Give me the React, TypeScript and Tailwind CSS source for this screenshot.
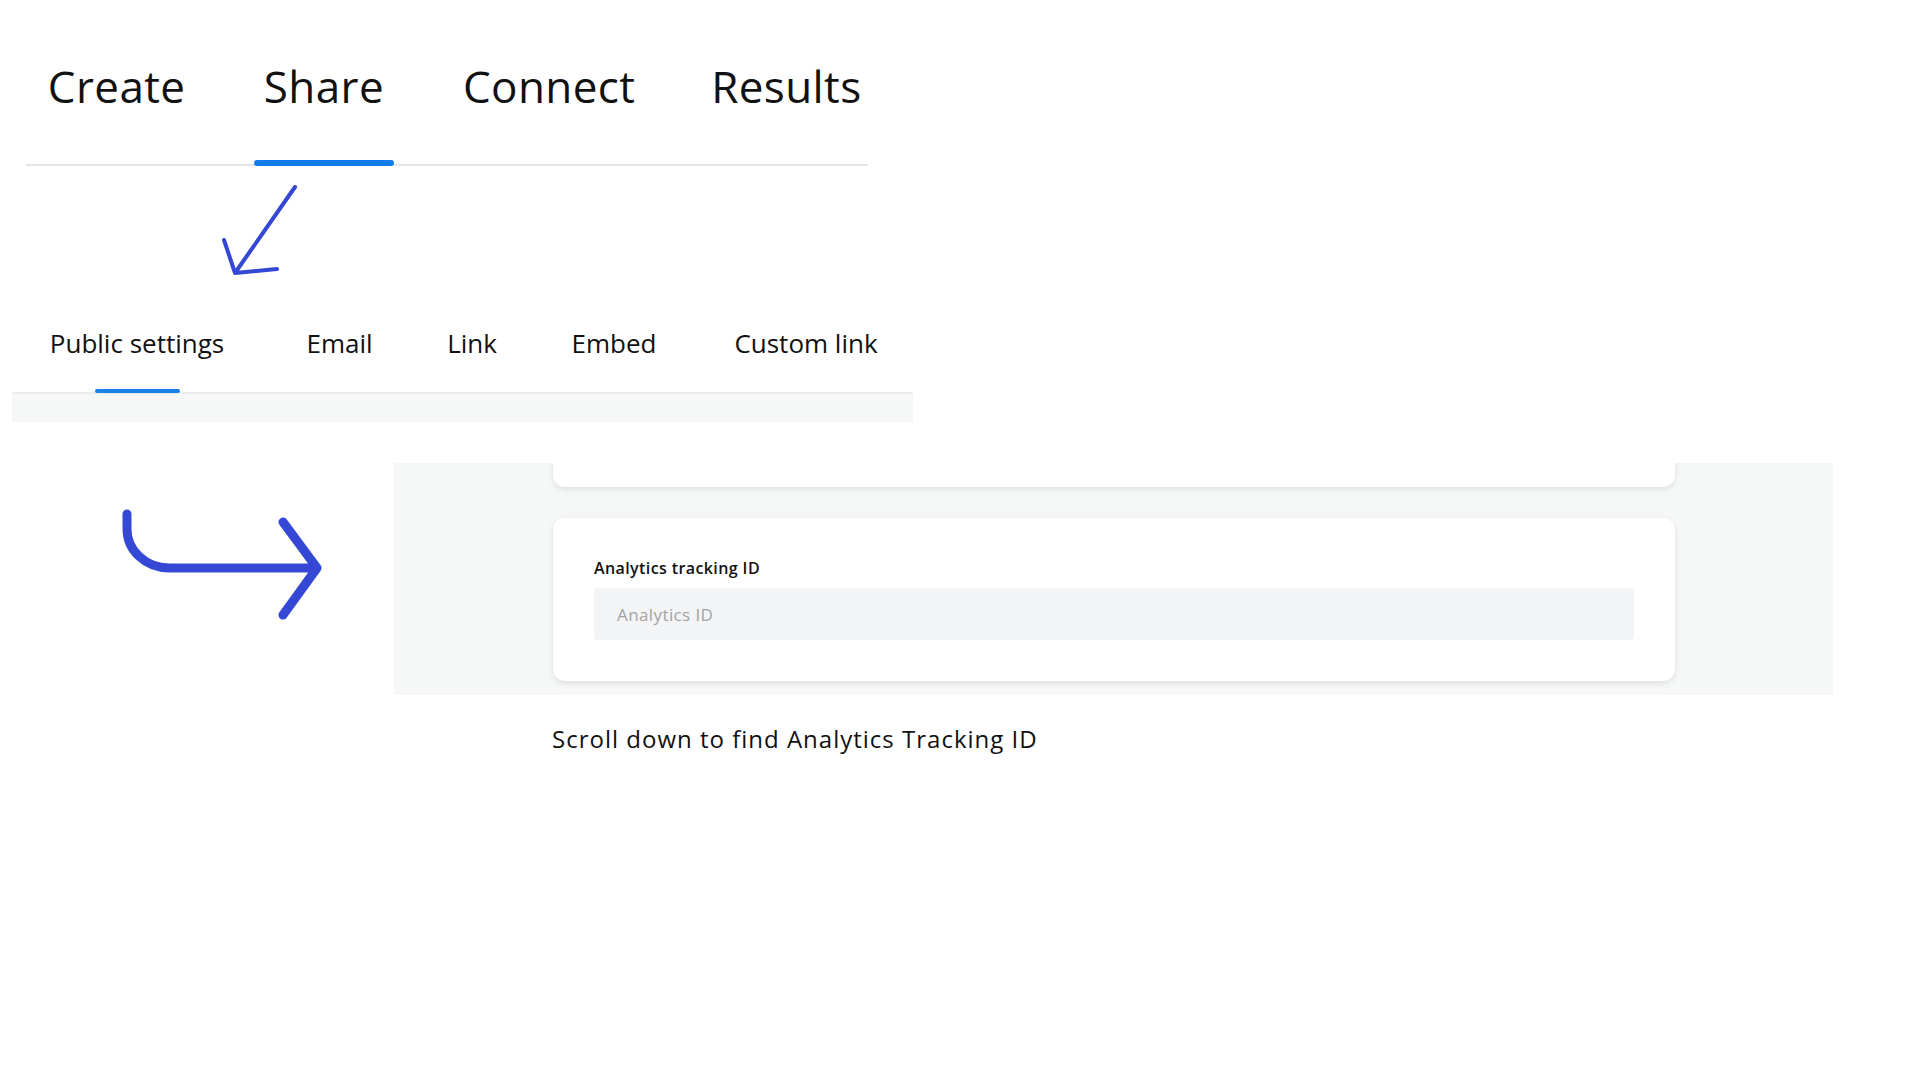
const mainTabs = [
  { label: "Create", width: "w-[160px]", active: false },
  { label: "Share", width: "w-[140px]", active: true },
  { label: "Connect", width: "w-[196px]", active: false },
  { label: "Results", width: "w-[164px]", active: false },
];

const shareTabs = [
  { label: "Public settings", width: "w-[200px]", active: true },
  { label: "Email", width: "w-[81px]", active: false },
  { label: "Link", width: "w-[60px]", active: false },
  { label: "Embed", width: "w-[100px]", active: false },
  { label: "Custom link", width: "w-[160px]", active: false },
];

const App = () => {
  return (
    <div className="min-h-[1080px] w-[1920px] bg-white font-['Open_Sans',sans-serif] text-[#111111]">
      {/* Main tabs */}
      <nav className="ml-[26px] flex w-[842px] gap-[58px] border-b-2 border-[#e4e4e4] pl-[11px]">
        {mainTabs.map((tab) => (
          <div key={tab.label} className={`flex flex-col items-center ${tab.width}`}>
            <span className="mt-[62px] text-[44px] font-medium leading-[48px] tracking-[0.4px]">{tab.label}</span>
            <div
              className={`relative -mb-[2px] mt-[50px] h-[6px] w-full rounded-full ${
                tab.active ? "bg-[#0f7be9]" : "bg-transparent"
              }`}
            />
          </div>
        ))}
      </nav>

      {/* Pointer arrow */}
      <div className="ml-[220px] mt-[18px] h-[92px] w-[80px]">
        <svg width="80" height="92" viewBox="0 0 80 92" fill="none">
          <path
            d="M75 3 L15 89 M4 56 L15 89 L57 85"
            stroke="#3447d5"
            strokeWidth="4"
            strokeLinecap="round"
            strokeLinejoin="round"
          />
        </svg>
      </div>

      {/* Share sub tabs */}
      <div className="ml-[12px] mt-[49px] w-[901px]">
        <nav className="flex gap-[62px] border-b-2 border-[#ececec] pl-[25px]">
          {shareTabs.map((tab) => (
            <div key={tab.label} className={`flex flex-col items-center ${tab.width}`}>
              <span className="text-[26px] leading-[36px]">{tab.label}</span>
              <div
                className={`relative -mb-[1px] mt-[28px] h-[4px] w-[85px] rounded-full ${
                  tab.active ? "bg-[#1b7fe6]" : "bg-transparent"
                }`}
              />
            </div>
          ))}
        </nav>
        <div className="h-[28px] bg-[#f6f7f7]" />
      </div>

      {/* Settings preview */}
      <div className="mt-[41px] flex">
        <div className="w-[394px]">
          <svg className="ml-[120px] mt-[46px]" width="205" height="112" viewBox="0 0 205 112" fill="none">
            <path
              d="M7 5 V20 A42 39 0 0 0 49 59 H197 M163 13 L197 59 L163 106"
              stroke="#3447d5"
              strokeWidth="9"
              strokeLinecap="round"
              strokeLinejoin="round"
            />
          </svg>
        </div>
        <div className="h-[232px] w-[1439px] overflow-hidden bg-[#f6f7f7] pl-[159px]">
          <div className="-mt-[40px] h-[64px] w-[1122px] rounded-xl bg-white shadow-[0_2px_6px_rgba(0,0,0,0.1)]" />
          <div className="mt-[31px] flex h-[163px] w-[1122px] flex-col rounded-xl bg-white px-[41px] pt-[39px] shadow-[0_2px_6px_rgba(0,0,0,0.1)]">
            <label className="text-[16px] font-semibold leading-[22px] tracking-[0.4px] text-[#111111]">
              Analytics tracking ID
            </label>
            <input
              type="text"
              placeholder="Analytics ID"
              className="mt-[9px] h-[52px] w-full rounded-[4px] bg-[#f3f4f6] px-[23px] text-[17px] tracking-[0.4px] text-[#333333] outline-none placeholder:text-[#a3a3a3]"
            />
          </div>
        </div>
      </div>

      <p className="ml-[552px] mt-[29px] text-[24px] leading-[30px] tracking-[1px] text-[#111111]">
        Scroll down to find Analytics Tracking ID
      </p>
    </div>
  );
};

export default App;
